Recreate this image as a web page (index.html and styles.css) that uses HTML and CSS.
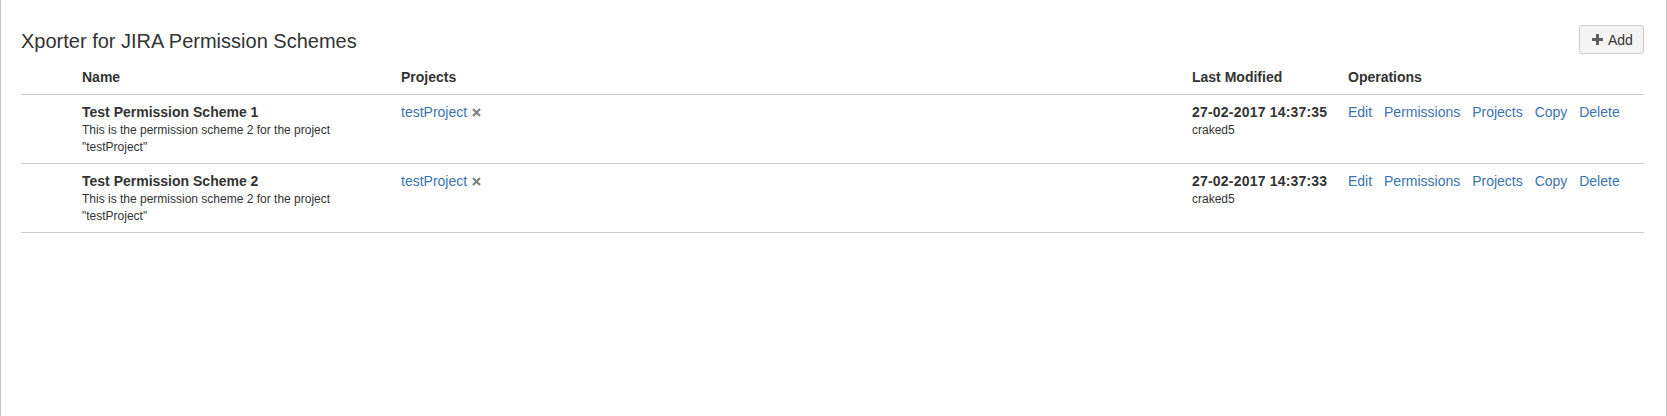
FILE: index.html
```html
<!DOCTYPE html>
<html>
<head>
<meta charset="utf-8">
<title>Xporter for JIRA Permission Schemes</title>
<link rel="stylesheet" href="styles.css">
</head>
<body>
<div class="frame">
  <div class="page-header">
    <h2 class="title">Xporter for JIRA Permission Schemes</h2>
    <button class="btn-add" type="button">
      <svg class="plus" width="11" height="11" viewBox="0 0 11 11"><path d="M4 0h3v4h4v3H7v4H4V7H0V4h4z" fill="#5e5e5e"/></svg>
      <span>Add</span>
    </button>
  </div>
  <table class="schemes">
    <colgroup>
      <col class="c-sel">
      <col class="c-name">
      <col class="c-proj">
      <col class="c-mod">
      <col class="c-ops">
    </colgroup>
    <thead>
      <tr>
        <th></th>
        <th>Name</th>
        <th>Projects</th>
        <th>Last Modified</th>
        <th>Operations</th>
      </tr>
    </thead>
    <tbody>
      <tr>
        <td></td>
        <td>
          <div class="name">Test Permission Scheme 1</div>
          <div class="desc">This is the permission scheme 2 for the project "testProject"</div>
        </td>
        <td><a class="link" href="#">testProject</a><span class="remove"><svg width="9" height="9" viewBox="0 0 9 9"><path d="M1 1L8 8M8 1L1 8" stroke="#808080" stroke-width="2.2"/></svg></span></td>
        <td>
          <div class="date">27-02-2017 14:37:35</div>
          <div class="user">craked5</div>
        </td>
        <td class="ops"><a class="link" href="#">Edit</a> <a class="link" href="#">Permissions</a> <a class="link" href="#">Projects</a> <a class="link" href="#">Copy</a> <a class="link" href="#">Delete</a></td>
      </tr>
      <tr>
        <td></td>
        <td>
          <div class="name">Test Permission Scheme 2</div>
          <div class="desc">This is the permission scheme 2 for the project "testProject"</div>
        </td>
        <td><a class="link" href="#">testProject</a><span class="remove"><svg width="9" height="9" viewBox="0 0 9 9"><path d="M1 1L8 8M8 1L1 8" stroke="#808080" stroke-width="2.2"/></svg></span></td>
        <td>
          <div class="date">27-02-2017 14:37:33</div>
          <div class="user">craked5</div>
        </td>
        <td class="ops"><a class="link" href="#">Edit</a> <a class="link" href="#">Permissions</a> <a class="link" href="#">Projects</a> <a class="link" href="#">Copy</a> <a class="link" href="#">Delete</a></td>
      </tr>
    </tbody>
  </table>
</div>
</body>
</html>
```
FILE: styles.css
```css
html, body {
  margin: 0;
  padding: 0;
  background: #fff;
}
body {
  font-family: "Liberation Sans", Arial, sans-serif;
  font-size: 14px;
  line-height: 20px;
  color: #333;
}
.frame {
  box-sizing: border-box;
  min-height: 100vh;
  border-left: 1px solid #c4c4c4;
  border-right: 1px solid #c4c4c4;
  padding: 25px 22px 0 20px;
}
.page-header {
  display: flex;
  justify-content: space-between;
  align-items: flex-start;
}
.title {
  margin: 1px 0 0 0;
  font-size: 20px;
  line-height: 30px;
  font-weight: normal;
  color: #333;
}
.btn-add {
  display: flex;
  align-items: center;
  gap: 5px;
  box-sizing: border-box;
  height: 29px;
  width: 65px;
  padding: 0 10px 0 12px;
  background: #f4f4f4;
  border: 1px solid #ccc;
  border-radius: 3px;
  font-family: inherit;
  font-size: 14px;
  color: #333;
}
.plus {
  display: block;
}
.schemes {
  width: 100%;
  margin-top: 4px;
  border-collapse: collapse;
  table-layout: fixed;
}
.c-sel { width: 53px; }
.c-name { width: 319px; }
.c-proj { width: 791px; }
.c-mod { width: 156px; }
.schemes th {
  text-align: left;
  font-weight: bold;
  padding: 7px 8px;
  border-bottom: 1px solid #ccc;
  color: #333;
}
.schemes td {
  vertical-align: top;
  padding: 7px 8px;
  border-bottom: 1px solid #ccc;
}
.name, .date {
  font-weight: bold;
  color: #333;
}
.date {
  letter-spacing: 0.2px;
}
.desc, .user {
  font-size: 12px;
  line-height: 17px;
  color: #333;
}
.link {
  color: #3b73af;
  text-decoration: none;
}
.remove {
  display: inline-block;
  margin-left: 5px;
  vertical-align: 0;
}
.remove svg {
  display: block;
}
.ops {
  white-space: nowrap;
}
.ops .link {
  margin-right: 8px;
}
```
